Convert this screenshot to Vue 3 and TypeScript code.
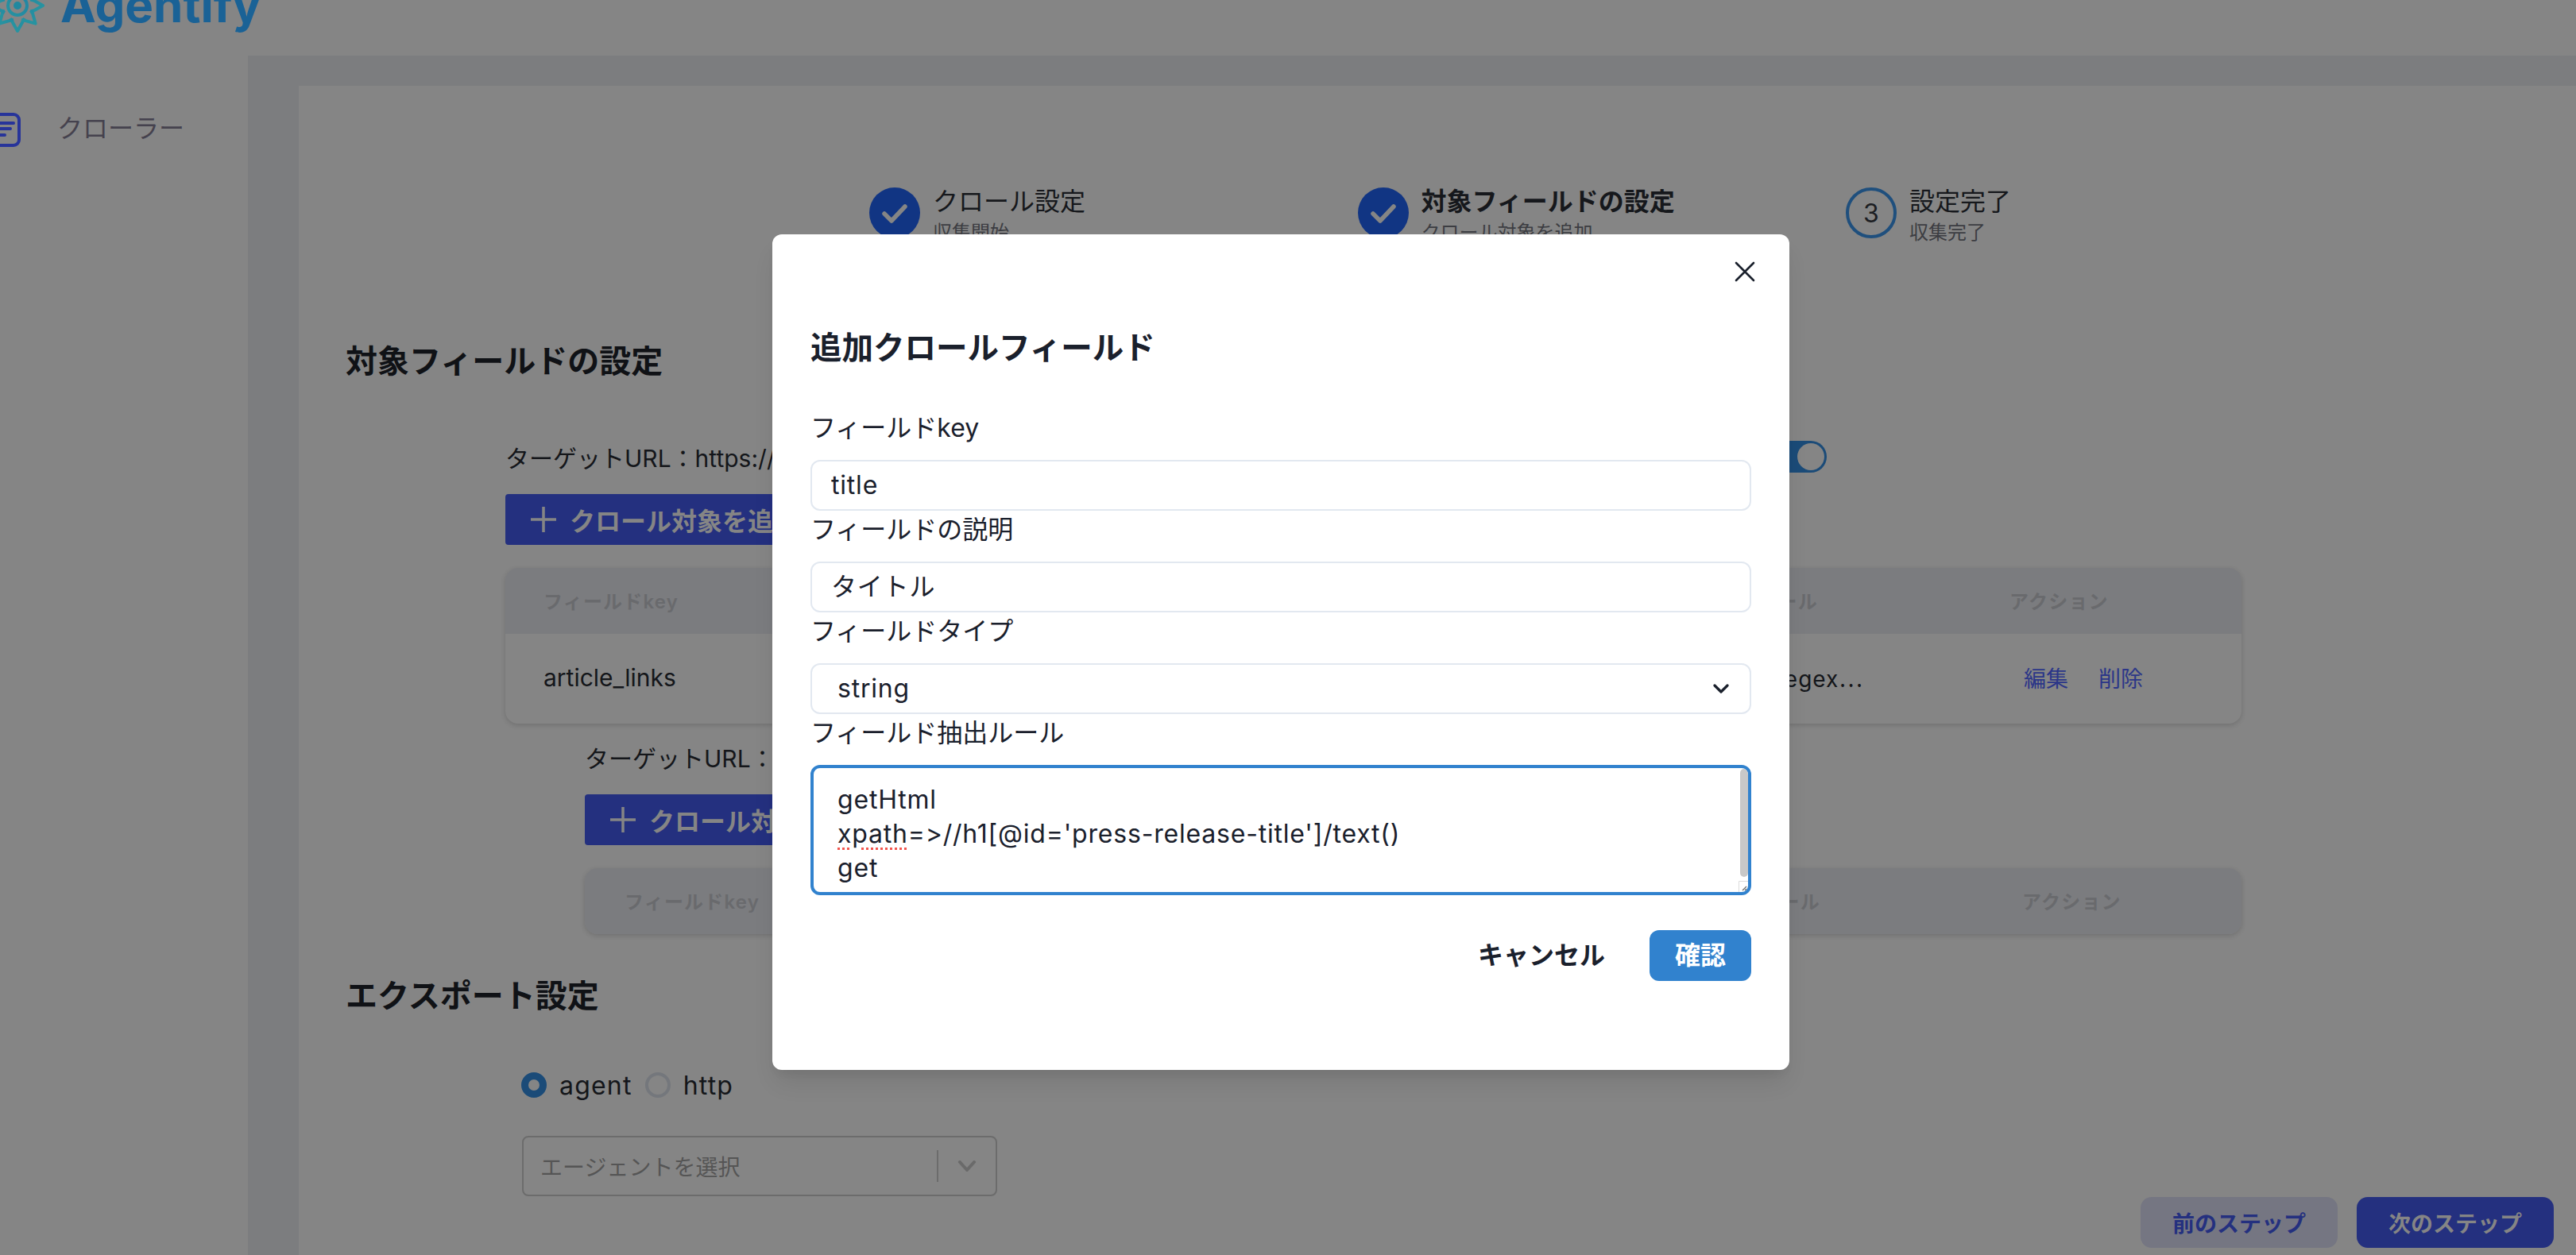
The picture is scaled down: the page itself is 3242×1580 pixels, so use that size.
<script lang="ts" setup>
const steps = [
  { title: "クロール設定", sub: "収集開始", done: true, active: false },
  { title: "対象フィールドの設定", sub: "クロール対象を追加", done: true, active: true },
  { title: "設定完了", sub: "収集完了", done: false, active: false },
];

const formFields = [
  { label: "フィールドkey", value: "title" },
  { label: "フィールドの説明", value: "タイトル" },
];

const rays = [0, 45, 90, 135, 180, 225, 270, 315];
</script>

<template>
  <div class="page">
    <header class="topbar">
      <svg class="logo-icon" width="72" height="48" viewBox="0 0 72 48" fill="none">
        <defs>
          <linearGradient id="logoGrad" x1="0" y1="40" x2="60" y2="0" gradientUnits="userSpaceOnUse">
            <stop offset="0" stop-color="#2a9a9e" />
            <stop offset="1" stop-color="#1f7fa6" />
          </linearGradient>
        </defs>
        <g stroke="url(#logoGrad)" stroke-width="4" stroke-linejoin="round">
          <circle cx="22" cy="7" r="5" fill="#21889f" stroke="none" />
          <circle cx="22" cy="7" r="12" />
          <path
            v-for="r in rays"
            :key="r"
            :transform="`rotate(${r} 22 7)`"
            d="M13 23L22 39L31 23"
          />
        </g>
      </svg>
      <span class="logo-text">Agentify</span>
    </header>

    <div class="body">
      <aside class="sidebar">
        <svg class="nav-icon" width="44" height="44" viewBox="0 0 44 44" fill="none" stroke="#27349a" stroke-width="4" stroke-linecap="round">
          <rect x="2" y="2" width="38" height="39" rx="7" />
          <path d="M10 13H33M10 20H29M10 28H22" />
        </svg>
        <span class="nav-label">クローラー</span>
      </aside>

      <main class="content">
        <section class="card">
          <div class="stepper">
            <div class="step" v-for="s in steps" :key="s.title">
              <div class="step-circle" :class="{ done: s.done }">
                <svg v-if="s.done" width="64" height="64" viewBox="0 0 64 64" fill="none">
                  <path d="M19 33L28 42L45 24" stroke="#858585" stroke-width="5.5" stroke-linecap="round" stroke-linejoin="round" />
                </svg>
                <span v-else>3</span>
              </div>
              <div class="step-text">
                <div class="step-title" :class="{ active: s.active }">{{ s.title }}</div>
                <div class="step-sub">{{ s.sub }}</div>
              </div>
            </div>
          </div>

          <h2 class="section-title first">対象フィールドの設定</h2>

          <div class="target">
            <div class="url-row">
              <span>ターゲットURL：https://</span>
              <span class="switch"><span class="knob"></span></span>
            </div>
            <div class="add-btn">
              <svg width="32" height="32" viewBox="0 0 32 32" fill="none" stroke="#858585" stroke-width="3.5">
                <path d="M16 0V32M0 16H32" />
              </svg>
              <span>クロール対象を追加</span>
            </div>
            <div class="table">
              <div class="t-row t-head">
                <span>フィールドkey</span>
                <span>抽出ルール</span>
                <span>アクション</span>
              </div>
              <div class="t-row t-body">
                <span>article_links</span>
                <span class="rule">regex⋯</span>
                <span class="actions"><a>編集</a><a>削除</a></span>
              </div>
            </div>
          </div>

          <div class="target nested">
            <div class="url-row"><span>ターゲットURL：a</span></div>
            <div class="add-btn">
              <svg width="32" height="32" viewBox="0 0 32 32" fill="none" stroke="#858585" stroke-width="3.5">
                <path d="M16 0V32M0 16H32" />
              </svg>
              <span>クロール対象を追加</span>
            </div>
            <div class="table">
              <div class="t-row t-head">
                <span>フィールドkey</span>
                <span>抽出ルール</span>
                <span>アクション</span>
              </div>
            </div>
          </div>

          <h2 class="section-title second">エクスポート設定</h2>

          <div class="radios">
            <span class="radio checked"></span>
            <span class="radio-label">agent</span>
            <span class="radio"></span>
            <span class="radio-label">http</span>
          </div>

          <div class="agent-select">
            <span class="agent-placeholder">エージェントを選択</span>
            <span class="agent-divider"></span>
            <svg width="24" height="14" viewBox="0 0 24 14" fill="none" stroke="#6a6a6a" stroke-width="4" stroke-linecap="round" stroke-linejoin="round">
              <path d="M3 2L12 12L21 2" />
            </svg>
          </div>
        </section>
      </main>
    </div>

    <div class="footer-btns">
      <div class="step-btn prev">前のステップ</div>
      <div class="step-btn next">次のステップ</div>
    </div>

    <div class="modal">
      <svg class="close" width="26" height="26" viewBox="0 0 26 26" fill="none" stroke="#1a202c" stroke-width="2.6" stroke-linecap="round">
        <path d="M2 2L24 24M24 2L2 24" />
      </svg>
      <h3 class="modal-title">追加クロールフィールド</h3>

      <template v-for="f in formFields" :key="f.label">
        <label class="form-label">{{ f.label }}</label>
        <div class="input">{{ f.value }}</div>
      </template>

      <label class="form-label">フィールドタイプ</label>
      <div class="input select">
        <span>string</span>
        <svg width="20" height="12" viewBox="0 0 20 12" fill="none" stroke="#1a202c" stroke-width="3.2" stroke-linecap="round" stroke-linejoin="round">
          <path d="M2 2L10 10L18 2" />
        </svg>
      </div>

      <label class="form-label">フィールド抽出ルール</label>
      <div class="textarea">
        <div>getHtml</div>
        <div><span class="misspelt">xpath</span>=&gt;//h1[@id='press-release-title']/text()</div>
        <div>get</div>
        <span class="scroll-thumb"></span>
        <svg class="resizer" width="12" height="14" viewBox="0 0 12 14" fill="none">
          <path d="M0.5 14V0.5H12" stroke="#dcdcdc" />
          <path d="M5 12L10 7M8 12L10 10" stroke="#6a6a6a" stroke-width="1.2" />
        </svg>
      </div>

      <div class="modal-actions">
        <span class="btn-ghost">キャンセル</span>
        <span class="btn-primary">確認</span>
      </div>
    </div>
  </div>
</template>

<style>
html,
body {
  margin: 0;
  background: #858585;
}
</style>

<style scoped>
.page {
  position: relative;
  width: 3242px;
  height: 1580px;
  overflow: hidden;
  background: #858585;
  font-family: Inter, "Noto Sans CJK JP", sans-serif;
  font-variant-ligatures: none;
  font-feature-settings: "calt" 0;
  color: #14161a;
}

.topbar {
  height: 70px;
  display: flex;
  align-items: flex-start;
}

.logo-icon {
  flex: none;
}

.logo-text {
  margin: -36px 0 0 4px;
  font-size: 60px;
  line-height: 84px;
  font-weight: 700;
  color: #1a6296;
}

.body {
  display: flex;
  height: 1510px;
}

.sidebar {
  width: 312px;
  flex: none;
  display: flex;
  align-items: flex-start;
  padding-top: 72px;
  box-sizing: border-box;
}

.nav-icon {
  margin-left: -16px;
  flex: none;
}

.nav-label {
  margin: -2px 0 0 44px;
  font-size: 32px;
  line-height: 44px;
  color: #45424e;
}

.content {
  flex: 1;
  padding: 38px 0 0 64px;
  background: #7c7d7f;
}

.card {
  height: 100%;
  background: #858585;
  padding-top: 128px;
  box-sizing: border-box;
}

.stepper {
  display: grid;
  grid-template-columns: repeat(3, 614.5px);
  height: 78px;
  padding-left: 718px;
}

.step {
  display: flex;
  gap: 16px;
}

.step-circle {
  width: 64px;
  height: 64px;
  box-sizing: border-box;
  border: 4px solid #1f4f7d;
  border-radius: 50%;
  display: flex;
  align-items: center;
  justify-content: center;
  font-size: 32px;
  color: #1b1d22;
}

.step-circle.done {
  border: none;
  background: #113583;
}

.step-text {
  padding-top: 2px;
}

.step-title {
  font-size: 32px;
  line-height: 32px;
  color: #16181c;
}

.step-title.active {
  font-weight: 700;
}

.step-sub {
  font-size: 24px;
  line-height: 46px;
  color: #3c3d42;
}

.section-title {
  margin: 0;
  padding-left: 59px;
  font-size: 40px;
  line-height: 60px;
  font-weight: 600;
  color: #101216;
}

.section-title.first {
  margin-top: 111px;
}

.section-title.second {
  margin-top: 48px;
}

.target {
  margin: 68px 0 0 260px;
  width: 2185px;
}

.target.nested {
  margin: 20px 0 0 360px;
  width: 2085px;
}

.url-row {
  display: flex;
  justify-content: space-between;
  align-items: center;
  height: 44px;
  width: 1663px;
  font-size: 30px;
  color: #14161a;
}

.switch {
  width: 84px;
  height: 40px;
  border-radius: 20px;
  background: #1b4b78;
  display: flex;
  justify-content: flex-end;
  align-items: center;
  padding-right: 3px;
  box-sizing: border-box;
}

.knob {
  width: 34px;
  height: 34px;
  border-radius: 50%;
  background: #858585;
}

.add-btn {
  margin-top: 25px;
  height: 64px;
  width: 500px;
  background: #24307f;
  border-radius: 4px;
  padding-left: 32px;
  box-sizing: border-box;
  display: flex;
  align-items: center;
  gap: 17px;
  font-size: 32px;
  font-weight: 600;
  color: #858585;
}

.table {
  margin-top: 29px;
  border-radius: 16px;
  overflow: hidden;
  box-shadow: 0 2px 6px rgba(0, 0, 0, 0.16);
}

.t-row {
  display: grid;
  grid-template-columns: 1478px 367px 1fr;
  padding-left: 48px;
}

.nested .t-row {
  grid-template-columns: 1379px 380px 1fr;
  padding-left: 50px;
}

.t-head {
  height: 83px;
  box-sizing: border-box;
  padding-bottom: 3px;
  align-items: center;
  background: #7b7c7f;
  font-size: 24px;
  font-weight: 600;
  letter-spacing: 1.2px;
  color: #696a6d;
}

.t-body {
  height: 113px;
  box-sizing: border-box;
  padding-bottom: 3px;
  align-items: center;
  font-size: 30px;
  color: #14161a;
}

.rule {
  text-align: right;
  padding-right: 184px;
  font-size: 28px;
  letter-spacing: 1px;
}

.actions {
  display: flex;
  gap: 38px;
  padding-left: 18px;
  font-size: 28px;
  color: #2b3688;
}

.radios {
  margin: 66px 0 0 280px;
  display: flex;
  align-items: center;
  height: 32px;
}

.radio {
  width: 32px;
  height: 32px;
  box-sizing: border-box;
  border: 4px solid #74777c;
  border-radius: 50%;
}

.radio.checked {
  border: 9px solid #1b4b78;
}

.radio-label {
  margin: 0 16px;
  font-size: 32px;
  letter-spacing: 1.2px;
  color: #14161a;
}

.agent-select {
  margin: 48px 0 0 281px;
  width: 598px;
  height: 76px;
  box-sizing: border-box;
  border: 2.5px solid #6c6c6c;
  border-radius: 8px;
  display: flex;
  align-items: center;
  padding-left: 21px;
}

.agent-placeholder {
  font-size: 28px;
  color: #555;
}

.agent-divider {
  margin-left: auto;
  width: 2px;
  height: 40px;
  background: #6c6c6c;
}

.agent-select svg {
  margin: 0 24px 0 24px;
}

.footer-btns {
  position: absolute;
  right: 28px;
  bottom: 9px;
  display: flex;
  gap: 24px;
}

.step-btn {
  width: 248px;
  height: 64px;
  border-radius: 14px;
  display: flex;
  align-items: center;
  justify-content: center;
  font-size: 28px;
  font-weight: 700;
}

.step-btn.prev {
  background: #757682;
  color: #24307f;
}

.step-btn.next {
  background: #24307f;
  color: #858585;
}

.modal {
  position: absolute;
  left: 972px;
  top: 295px;
  width: 1280px;
  height: 1052px;
  box-sizing: border-box;
  padding: 113px 48px 0;
  background: #fff;
  border-radius: 12px;
  box-shadow: 0 20px 30px -6px rgba(0, 0, 0, 0.1), 0 8px 12px -4px rgba(0, 0, 0, 0.05);
  color: #1a202c;
}

.close {
  position: absolute;
  top: 34px;
  right: 43px;
}

.modal-title {
  margin: 0 0 47px;
  font-size: 39.5px;
  line-height: 60px;
  font-weight: 600;
}

.form-label {
  display: block;
  font-size: 32px;
  line-height: 48px;
  margin-bottom: 16px;
}

.input {
  height: 64px;
  box-sizing: border-box;
  border: 2px solid #e2e8f0;
  border-radius: 12px;
  padding: 0 24px;
  font-size: 32px;
  line-height: 60px;
  letter-spacing: 0.8px;
}

.select {
  display: flex;
  justify-content: space-between;
  align-items: center;
  padding: 0 26px 0 32px;
}

.textarea {
  position: relative;
  height: 164px;
  box-sizing: border-box;
  border: 4px solid #3182ce;
  border-radius: 12px;
  padding: 18px 30px 0;
  font-size: 32px;
  line-height: 43px;
  letter-spacing: 0.8px;
  overflow: hidden;
}

.misspelt {
  text-decoration: underline dotted #f2564f 3px;
  text-underline-offset: 6px;
}

.scroll-thumb {
  position: absolute;
  top: 1px;
  right: 0;
  width: 10px;
  height: 136px;
  border-radius: 5px;
  background: #c8c8c8;
}

.resizer {
  position: absolute;
  right: 0;
  bottom: 0;
}

.modal-actions {
  margin-top: 44px;
  display: flex;
  justify-content: flex-end;
  gap: 24px;
  font-size: 32px;
  font-weight: 600;
}

.btn-ghost,
.btn-primary {
  height: 64px;
  line-height: 64px;
  padding: 0 32px;
  border-radius: 12px;
}

.btn-primary {
  background: #3182ce;
  color: #fff;
}
</style>
